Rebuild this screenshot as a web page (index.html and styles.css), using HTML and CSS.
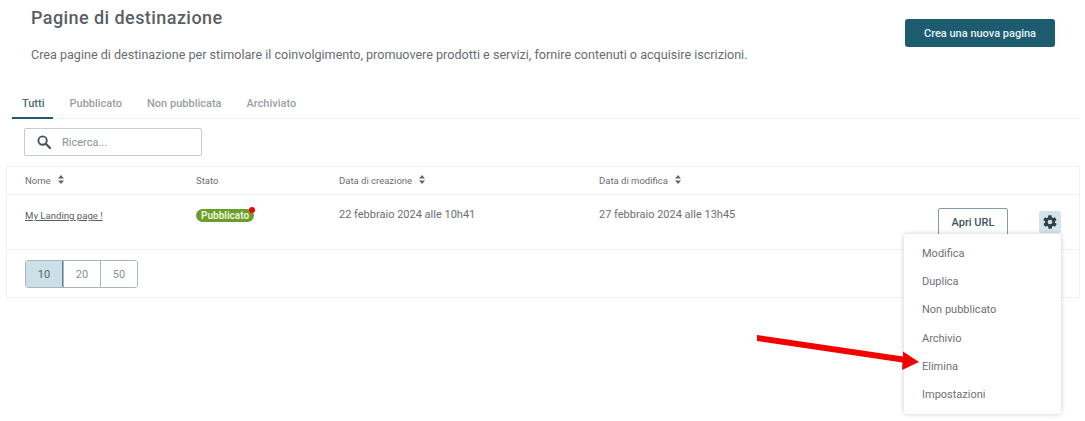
FILE: index.html
```html
<!DOCTYPE html>
<html lang="en">
<head>
    <meta charset="UTF-8">
    <meta name="viewport" content="width=device-width, initial-scale=1.0">
    <title>Pagine di destinazione</title>
    <link rel="stylesheet" href="styles.css">
</head>
<body>

    <div class="page">
        <div class="page-header">
            <div class="page-intro">
                <h1>Pagine di destinazione</h1>
                <p>Crea pagine di destinazione per stimolare il coinvolgimento, promuovere prodotti e servizi, fornire contenuti o acquisire iscrizioni.</p>
            </div>
            <button class="btn-create">Crea una nuova pagina</button>
        </div>

        <div class="tabs">
            <a class="tab active">Tutti</a>
            <a class="tab">Pubblicato</a>
            <a class="tab">Non pubblicata</a>
            <a class="tab">Archiviato</a>
        </div>

        <div class="search-box">
            <svg class="search-icon" width="14" height="14" viewBox="0 0 14 14">
                <circle cx="5.6" cy="5.6" r="4.2" fill="none" stroke="#46525a" stroke-width="1.9"/>
                <path d="M8.8 8.8L13 13" stroke="#46525a" stroke-width="2.2" stroke-linecap="round"/>
            </svg>
            <span>Ricerca...</span>
        </div>

        <div class="table">
            <div class="row row-head">
                <div class="col-name">Nome <svg class="sort" width="6" height="9" viewBox="0 0 6 9"><path d="M3 0L6 3.6H0zM3 9L0 5.4H6z"/></svg></div>
                <div class="col-state">Stato</div>
                <div class="col-created">Data di creazione <svg class="sort" width="6" height="9" viewBox="0 0 6 9"><path d="M3 0L6 3.6H0zM3 9L0 5.4H6z"/></svg></div>
                <div class="col-edited">Data di modifica <svg class="sort" width="6" height="9" viewBox="0 0 6 9"><path d="M3 0L6 3.6H0zM3 9L0 5.4H6z"/></svg></div>
            </div>
            <div class="row row-body">
                <div class="col-name"><a class="page-link">My Landing page !</a></div>
                <div class="col-state"><span class="badge">Pubblicato</span></div>
                <div class="col-created">22 febbraio 2024 alle 10h41</div>
                <div class="col-edited">27 febbraio 2024 alle 13h45</div>
                <div class="col-actions">
                    <button class="btn-url">Apri URL</button>
                    <span class="gear">
                        <svg width="16" height="16" viewBox="0 0 24 24"><path fill="#2f3f47" d="M19.4 13c.1-.3.1-.7.1-1s0-.7-.1-1l2.1-1.6c.2-.2.2-.4.1-.6l-2-3.5c-.1-.2-.4-.3-.6-.2l-2.5 1c-.5-.4-1.1-.7-1.7-1l-.4-2.6c0-.3-.2-.5-.5-.5h-4c-.3 0-.5.2-.5.4l-.4 2.7c-.6.2-1.1.6-1.7 1l-2.5-1c-.2-.1-.5 0-.6.2l-2 3.5c-.1.2-.1.5.1.6L4.6 11c0 .3-.1.7-.1 1s0 .7.1 1l-2.1 1.6c-.2.2-.2.4-.1.6l2 3.5c.1.2.4.3.6.2l2.5-1c.5.4 1.1.7 1.7 1l.4 2.6c0 .3.2.5.5.5h4c.3 0 .5-.2.5-.4l.4-2.7c.6-.2 1.1-.6 1.7-1l2.5 1c.2.1.5 0 .6-.2l2-3.5c.1-.2.1-.5-.1-.6zM12 15.5a3.5 3.5 0 1 1 0-7 3.5 3.5 0 0 1 0 7z"/></svg>
                    </span>
                </div>
            </div>
            <div class="table-footer">
                <div class="page-size">
                    <button class="size active">10</button>
                    <button class="size">20</button>
                    <button class="size">50</button>
                </div>
            </div>
        </div>
    </div>

    <div class="menu">
        <a>Modifica</a>
        <a>Duplica</a>
        <a>Non pubblicato</a>
        <a>Archivio</a>
        <a>Elimina</a>
        <a>Impostazioni</a>
    </div>

    <svg class="arrow" width="170" height="40" viewBox="0 0 170 40">
        <path fill="#f40000" d="M1 0L147 21.500L147 16.500L163 27L146 35L146.500 27.500L1 6z"/>
    </svg>

</body>
</html>
```

FILE: styles.css
```css
* {
    box-sizing: border-box;
}
html, body {
    margin: 0;
    height: 421px;
    overflow: hidden;
}
body {
    font-family: Roboto, "Liberation Sans", sans-serif;
    color: #5f6468;
    background-color: #fff;
    position: relative;
}
.page {
    padding: 0 5px 0 6px;
}
.page-header {
    display: flex;
    justify-content: space-between;
    padding: 7px 25px 0 25px;
    height: 93px;
}
.page-intro h1 {
    margin: 0;
    font-size: 18px;
    line-height: 21px;
    font-weight: 500;
    color: #5a5f63;
    letter-spacing: 0.43px;
}
.page-intro p {
    margin: 17px 0 0;
    font-size: 12.58px;
    line-height: 20px;
    color: #686d71;
}
.btn-create {
    margin-top: 12px;
    width: 150px;
    height: 28px;
    border: 0;
    border-radius: 3px;
    background-color: #1d5c6e;
    color: #e3f0f4;
    font-family: inherit;
    font-size: 11px;
    font-weight: 500;
}
.tabs {
    display: flex;
    height: 26px;
    border-bottom: 1px solid #f0f1f2;
    padding-left: 6px;
}
.tab {
    padding: 4px 10px 0;
    margin-right: 5px;
    height: 26px;
    font-size: 11px;
    font-weight: 500;
    color: #9a9fa3;
}
.tab.active {
    padding-right: 8px;
    margin-right: 7px;
    color: #4a6a76;
    border-bottom: 2px solid #1d5c6e;
}
.search-box {
    display: flex;
    align-items: center;
    margin: 9px 0 10px 18px;
    width: 178px;
    height: 28px;
    border: 1px solid #c4ccd2;
    border-radius: 2px;
    padding-left: 12px;
    font-size: 11px;
    color: #8b9095;
}
.search-icon {
    margin-right: 11px;
}
.table {
    border: 1px solid #f0f1f2;
}
.row {
    display: flex;
    font-size: 11px;
}
.row-head {
    height: 28px;
    padding-bottom: 1px;
    align-items: center;
    border-bottom: 1px solid #f0f1f2;
    font-size: 9.5px;
    color: #6a6f73;
}
.row-body {
    position: relative;
    height: 55px;
    border-bottom: 1px solid #f0f1f2;
    padding-top: 13px;
}
.col-name {
    width: 189px;
    padding-left: 18px;
}
.col-state {
    width: 143px;
}
.col-created {
    width: 260px;
}
.col-edited {
    width: 300px;
}
.row-body .col-name,
.row-body .col-state {
    padding-top: 1px;
}
.row-body .col-created,
.row-body .col-edited {
    color: #6a6f73;
}
.sort {
    margin-left: 5px;
    fill: #5f6468;
}
.page-link {
    font-size: 9.6px;
    color: #5a5f63;
    text-decoration: underline;
}
.badge {
    position: relative;
    display: inline-block;
    height: 13px;
    line-height: 13px;
    padding: 0 5px;
    border-radius: 7px;
    background-color: #6a9e2a;
    color: #e8f3d8;
    font-size: 10px;
    font-weight: 700;
}
.badge::after {
    content: "";
    position: absolute;
    top: -2px;
    right: -1px;
    width: 6px;
    height: 6px;
    border-radius: 50%;
    background-color: #f00000;
}
.col-actions {
    display: flex;
    align-items: flex-start;
    margin-left: 39px;
}
.btn-url {
    width: 70px;
    height: 28px;
    border: 1px solid #7f9ea9;
    border-radius: 2px;
    background-color: #fff;
    color: #3a5560;
    font-family: inherit;
    font-size: 11px;
    font-weight: 500;
}
.gear {
    display: flex;
    align-items: center;
    justify-content: center;
    margin: 3px 0 0 31px;
    width: 22px;
    height: 22px;
    border-radius: 2px;
    background-color: #d4e3ea;
}
.table-footer {
    height: 47px;
    padding: 10px 0 0 18px;
}
.page-size {
    display: inline-flex;
    height: 28px;
    border: 1px solid #a9b6bd;
    border-radius: 3px;
    overflow: hidden;
}
.size {
    width: 37px;
    border: 0;
    border-left: 1px solid #a9b6bd;
    background-color: #fff;
    color: #8a9095;
    font-family: inherit;
    font-size: 11px;
    padding: 0;
}
.size:first-child {
    border-left: 0;
}
.size.active {
    background-color: #cddfe7;
    color: #546a75;
    border-right: 1px solid #5f8494;
}
.menu {
    position: absolute;
    left: 904px;
    top: 234px;
    width: 157px;
    height: 180px;
    padding: 6px 0 4px;
    border-radius: 3px;
    background-color: #fff;
    box-shadow: 0 0 5px rgba(0, 0, 0, 0.22);
    display: flex;
    flex-direction: column;
}
.menu a {
    height: 28.2px;
    line-height: 28.2px;
    padding-left: 18px;
    font-size: 11px;
    color: #6d7175;
}
.arrow {
    position: absolute;
    left: 756px;
    top: 335px;
}
```
